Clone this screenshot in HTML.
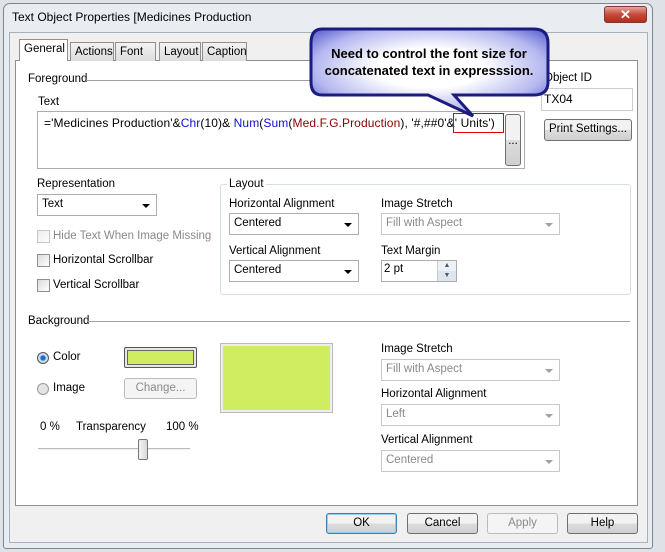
<!DOCTYPE html>
<html><head><meta charset="utf-8"><style>
*{box-sizing:border-box;margin:0;padding:0}
body{width:665px;height:552px;overflow:hidden;background:#dfe3e8;font-family:"Liberation Sans",sans-serif;font-size:11.5px;color:#000;position:relative}
.a{position:absolute}
.win{left:3px;top:3px;width:650px;height:546px;background:#e9edf2;border:1px solid #7a8796;border-radius:7px 7px 3px 3px}
.client{left:9px;top:32px;width:639px;height:511px;background:#f0f0f0;border:1px solid #a7b1bd}
.panel{left:15px;top:60px;width:623px;height:446px;background:#fff;border:1px solid #8e8f8f}
.tab{top:42px;height:19px;background:linear-gradient(#f3f3f3,#dcdcdc);border:1px solid #8e8f8f;border-bottom:none;padding:3px 4px;font-size:11.5px}
.sel{background:#fff;top:39px;height:22px}
.dd{height:22px;border:1px solid #abadb3;background:#fff;padding:3px 4px}
.dd:after{content:"";position:absolute;right:6px;top:9px;border:4px solid transparent;border-top:4px solid #000}
.dis{color:#8a8a8a;border-color:#c8c8c8}
.dis:after{border-top-color:#a0a0a0}
.cb{width:13px;height:13px;border:1px solid #8f8f8f;background:linear-gradient(135deg,#dcdcdc,#fff)}
.btn{height:21px;border:1px solid #707070;border-radius:3px;background:linear-gradient(#f2f2f2 50%,#dddddd 50%,#cfcfcf);text-align:center;padding-top:3px}
.gr{color:#8a8a8a}
</style></head><body>
<div class="a win"></div>
<div class="a" style="left:12px;top:10px;font-size:12px">Text Object Properties [Medicines Production</div>
<div class="a" style="left:604px;top:6px;width:43px;height:17px;border:1px solid #7d3a33;border-radius:3px;background:linear-gradient(#e6a69c,#c8493a 50%,#b22c1d);color:#fff;font-weight:bold;text-align:center;font-size:13px;line-height:16px">✕</div>
<div class="a client"></div>
<div class="a panel"></div>
<div class="a tab sel" style="left:19px;width:49px">General</div>
<div class="a tab" style="left:70px;width:44px">Actions</div>
<div class="a tab" style="left:115px;width:41px">Font</div>
<div class="a tab" style="left:159px;width:42px">Layout</div>
<div class="a tab" style="left:202px;width:45px">Caption</div>

<div class="a" style="left:28px;top:73px">Foreground</div>
<div class="a" style="left:86px;top:80px;width:450px;height:1px;background:#a0a0a0"></div>
<div class="a" style="left:544px;top:72px">Object ID</div>
<div class="a" style="left:541px;top:88px;width:92px;height:23px;border:1px solid #ccc;padding:3px 2px;font-size:12px">TX04</div>
<div class="a btn" style="left:544px;top:119px;width:88px;height:22px">Print Settings...</div>
<div class="a" style="left:38px;top:96px">Text</div>
<div class="a" style="left:37px;top:111px;width:488px;height:58px;border:1px solid #abadb3;background:#fff"></div>
<div class="a" style="left:44px;top:116px;font-size:12px;white-space:nowrap;letter-spacing:0.1px">='Medicines Production'&amp;<span style="color:#1010d0">Chr</span>(10)&amp; <span style="color:#1010d0">Num</span>(<span style="color:#1010d0">Sum</span>(<span style="color:#8b0000">Med.F.G.Production</span>), '#,##0'&amp;' Units')</div>
<div class="a" style="left:453px;top:113px;width:51px;height:20px;border:1px solid #e00000"></div>
<div class="a btn" style="left:505px;top:114px;width:16px;height:52px;padding-top:20px">...</div>

<div class="a" style="left:37px;top:178px">Representation</div>
<div class="a dd" style="left:37px;top:194px;width:120px">Text</div>
<div class="a cb" style="left:37px;top:230px;opacity:.5"></div><div class="a gr" style="left:53px;top:230px">Hide Text When Image Missing</div>
<div class="a cb" style="left:37px;top:254px"></div><div class="a" style="left:53px;top:254px">Horizontal Scrollbar</div>
<div class="a cb" style="left:37px;top:279px"></div><div class="a" style="left:53px;top:279px">Vertical Scrollbar</div>

<div class="a" style="left:220px;top:184px;width:411px;height:111px;border:1px solid #d5dfe5;border-radius:3px"></div>
<div class="a" style="left:227px;top:178px;background:#fff;padding:0 2px">Layout</div>
<div class="a" style="left:229px;top:198px">Horizontal Alignment</div>
<div class="a dd" style="left:229px;top:213px;width:130px">Centered</div>
<div class="a" style="left:381px;top:198px">Image Stretch</div>
<div class="a dd dis" style="left:381px;top:213px;width:179px">Fill with Aspect</div>
<div class="a" style="left:229px;top:245px">Vertical Alignment</div>
<div class="a dd" style="left:229px;top:260px;width:130px">Centered</div>
<div class="a" style="left:381px;top:245px">Text Margin</div>
<div class="a" style="left:381px;top:260px;width:76px;height:22px;border:1px solid #abadb3;padding:2px 2px">2 pt</div>
<div class="a" style="left:437px;top:261px;width:19px;height:20px;border-left:1px solid #ccc;background:linear-gradient(#eef2f8 50%,#dde5ef 50%);font-size:7px;color:#556;text-align:center;line-height:10px">▲<br>▼</div>

<div class="a" style="left:28px;top:315px">Background</div>
<div class="a" style="left:88px;top:321px;width:542px;height:1px;background:#a0a0a0"></div>
<div class="a" style="left:37px;top:352px;width:12px;height:12px;border-radius:50%;border:1px solid #555;background:radial-gradient(#1b6fcf 30%,#cde 45%)"></div>
<div class="a" style="left:53px;top:351px">Color</div>
<div class="a" style="left:124px;top:347px;width:73px;height:21px;border:1px solid #555;border-radius:2px;padding:2px;background:#e6e6e6"><div style="width:100%;height:100%;background:#d0ec60;border:1px solid #666"></div></div>
<div class="a" style="left:37px;top:383px;width:12px;height:12px;border-radius:50%;border:1px solid #999;background:#e4e4e4"></div>
<div class="a" style="left:53px;top:382px">Image</div>
<div class="a btn gr" style="left:124px;top:378px;width:73px;border-color:#bbb;background:#f4f4f4">Change...</div>
<div class="a" style="left:40px;top:421px">0 %</div>
<div class="a" style="left:76px;top:421px">Transparency</div>
<div class="a" style="left:166px;top:421px">100 %</div>
<div class="a" style="left:38px;top:448px;width:152px;height:2px;border-top:1px solid #bbb;border-bottom:1px solid #eee"></div>
<div class="a" style="left:138px;top:439px;width:10px;height:21px;border:1px solid #777;border-radius:2px;background:linear-gradient(90deg,#f4f4f4,#d8d8d8)"></div>
<div class="a" style="left:220px;top:343px;width:113px;height:70px;border:1px solid #bbb;padding:2px;background:#eee"><div style="width:100%;height:100%;background:#d0ec60"></div></div>
<div class="a" style="left:381px;top:343px">Image Stretch</div>
<div class="a dd dis" style="left:381px;top:359px;width:179px">Fill with Aspect</div>
<div class="a" style="left:381px;top:388px">Horizontal Alignment</div>
<div class="a dd dis" style="left:381px;top:404px;width:179px">Left</div>
<div class="a" style="left:381px;top:434px">Vertical Alignment</div>
<div class="a dd dis" style="left:381px;top:450px;width:179px">Centered</div>

<div class="a btn" style="left:326px;top:513px;width:71px;border-color:#3c7fb1;box-shadow:inset 0 0 0 1px #8fd0f0">OK</div>
<div class="a btn" style="left:407px;top:513px;width:71px">Cancel</div>
<div class="a btn gr" style="left:487px;top:513px;width:71px;border-color:#bbb;background:#f4f4f4">Apply</div>
<div class="a btn" style="left:567px;top:513px;width:71px">Help</div>

<svg class="a" style="left:308px;top:26px" width="246" height="94">
<defs><radialGradient id="g" cx="50%" cy="45%" r="65%"><stop offset="0.35" stop-color="#fff"/><stop offset="0.75" stop-color="#b5b8ef"/><stop offset="1" stop-color="#5b5fd0"/></radialGradient></defs>
<path d="M14 3 H226 Q240 3 240 17 V56 Q240 69 226 69 H146 L165 90 L120 69 H14 Q3 69 3 56 V17 Q3 3 14 3 Z" fill="url(#g)" stroke="#1c1c80" stroke-width="3"/>
</svg>
<div class="a" style="left:312px;top:45px;width:234px;text-align:center;font-weight:bold;font-size:13px;line-height:17px">Need to control the font size for<br>concatenated text in expresssion.</div>
</body></html>
